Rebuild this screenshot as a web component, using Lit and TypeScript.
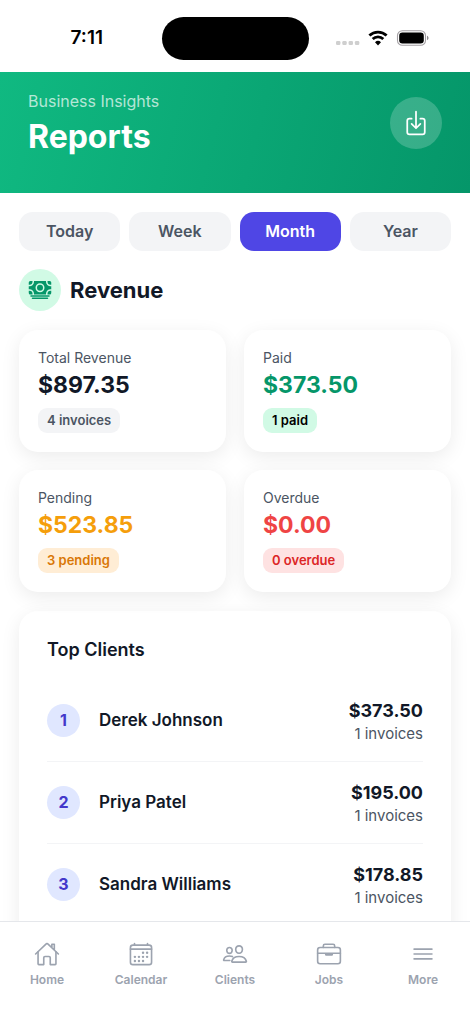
import { LitElement, html, css, svg } from "lit";
import { customElement, property, state } from "lit/decorators.js";
import { classMap } from "lit/directives/class-map.js";

const icons = {
  home: svg`<path d="M80 212v236a16 16 0 0016 16h96V328a24 24 0 0124-24h80a24 24 0 0124 24v136h96a16 16 0 0016-16V212"/><path d="M480 256L266.89 52c-5-5.28-16.69-5.34-21.78 0L32 256M400 179V64h-48v69"/>`,
  calendar: svg`<rect x="48" y="80" width="416" height="384" rx="48"/><path d="M128 48v32M384 48v32M464 160H48"/><g class="dots"><circle cx="296" cy="232" r="24"/><circle cx="376" cy="232" r="24"/><circle cx="136" cy="312" r="24"/><circle cx="216" cy="312" r="24"/><circle cx="296" cy="312" r="24"/><circle cx="376" cy="312" r="24"/><circle cx="136" cy="392" r="24"/><circle cx="216" cy="392" r="24"/><circle cx="296" cy="392" r="24"/></g>`,
  people: svg`<path d="M402 168c-2.93 40.67-33.1 72-66 72s-63.12-31.32-66-72c-3-42.31 26.37-72 66-72s69 30.46 66 72z"/><path d="M336 304c-65.17 0-127.84 32.37-143.54 95.41-2.08 8.34 3.15 16.59 11.72 16.59h263.65c8.57 0 13.77-8.25 11.72-16.59C463.85 335.36 401.18 304 336 304z"/><path d="M200 185.94c-2.34 32.48-26.72 58.06-53 58.06s-50.7-25.57-53-58.06C91.61 152.15 115.34 128 147 128s55.39 24.77 53 57.94z"/><path d="M206 306c-18.05-8.27-37.93-11.45-59-11.45-52 0-102.1 25.85-114.65 76.2-1.65 6.66 2.53 13.25 9.37 13.25H154"/>`,
  briefcase: svg`<rect x="32" y="128" width="448" height="320" rx="48"/><path d="M144 128V96a32 32 0 0132-32h160a32 32 0 0132 32v32M480 240H32M320 240v24a8 8 0 01-8 8H200a8 8 0 01-8-8v-24"/>`,
  menu: svg`<path d="M80 160h352M80 256h352M80 352h352"/>`,
  download: svg`<path d="M336 176h40a40 40 0 0140 40v208a40 40 0 01-40 40H136a40 40 0 01-40-40V216a40 40 0 0140-40h40"/><path d="M176 272l80 80 80-80M256 48v288"/>`,
  cash: svg`<path d="M448 400H64a16 16 0 010-32h384a16 16 0 010 32zM416 448H96a16 16 0 010-32h320a16 16 0 010 32zM32 272H16v48a32 32 0 0032 32h48v-16a64.07 64.07 0 00-64-64z"/><path d="M480 240h16v-64h-16a96.11 96.11 0 01-96-96V64H128v16a96.11 96.11 0 01-96 96H16v64h16a96.11 96.11 0 0196 96v16h256v-16a96.11 96.11 0 0196-96zm-224 64a96 96 0 1196-96 96.11 96.11 0 01-96 96z"/><circle cx="256" cy="208" r="64"/><path d="M416 336v16h48a32 32 0 0032-32v-48h-16a64.07 64.07 0 00-64 64zM480 144h16V96a32 32 0 00-32-32h-48v16a64.07 64.07 0 0064 64zM96 80V64H48a32 32 0 00-32 32v48h16a64.07 64.07 0 0064-64z"/>`,
};

type IconName = keyof typeof icons;

@customElement("line-icon")
export class LineIcon extends LitElement {
  @property() name: IconName = "home";

  static styles = css`
    :host {
      display: block;
      width: 26px;
      height: 26px;
    }
    svg {
      display: block;
      width: 100%;
      height: 100%;
      fill: none;
      stroke: currentColor;
      stroke-width: 32;
      stroke-linecap: round;
      stroke-linejoin: round;
    }
    .dots,
    .solid {
      fill: currentColor;
      stroke: none;
    }
  `;

  render() {
    return html`<svg viewBox="0 0 512 512" aria-hidden="true" class=${classMap({ solid: this.name === "cash" })}>
      ${icons[this.name]}
    </svg>`;
  }
}

@customElement("status-bar")
export class StatusBar extends LitElement {
  static styles = css`
    :host {
      display: grid;
      grid-template-columns: 1fr 147px 1fr;
      align-items: center;
      height: 72px;
      box-sizing: border-box;
      padding: 8px 0 4px;
      background: #fff;
      color: #000;
    }
    .time {
      padding-left: 12px;
      text-align: center;
      font-size: 19px;
      font-weight: 600;
      line-height: 24px;
    }
    .island {
      height: 43px;
      border-radius: 22px;
      background: #000;
    }
    .indicators {
      display: flex;
      align-items: center;
      justify-content: flex-end;
      gap: 8px;
      padding-right: 41px;
    }
    .indicators svg {
      display: block;
    }
    .signal {
      margin-top: 10px;
    }
  `;

  render() {
    return html`
      <div class="time">7:11</div>
      <div class="island"></div>
      <div class="indicators">
        <svg class="signal" width="24" height="4" viewBox="0 0 24 4" fill="#cfcfcf" aria-hidden="true">
          <rect x="0" width="4.4" height="4" rx="1.2" />
          <rect x="6.3" width="4.4" height="4" rx="1.2" />
          <rect x="12.6" width="4.4" height="4" rx="1.2" />
          <rect x="18.9" width="4.4" height="4" rx="1.2" />
        </svg>
        <svg width="20" height="16" viewBox="0 0 20 16" fill="none" stroke="#000" stroke-width="2.8" aria-hidden="true">
          <path d="M1.4 5.6a12.4 12.4 0 0 1 17.2 0" />
          <path d="M4.7 9.1a7.6 7.6 0 0 1 10.6 0" />
          <path d="M10 15.4l-3-3.2a4.3 4.3 0 0 1 6 0z" fill="#000" stroke="none" />
        </svg>
        <svg width="33" height="16" viewBox="0 0 33 16" aria-hidden="true">
          <rect x="1.5" y=".7" width="28" height="14.6" rx="4.8" fill="none" stroke="#a39fa3" stroke-width="1.1" />
          <rect x="3.2" y="2.5" width="24.6" height="11" rx="3.2" fill="#000" />
          <path d="M31 5.8v4.4c1-.4 1.5-1.2 1.5-2.2s-.5-1.8-1.5-2.2z" fill="#8f8b8f" />
        </svg>
      </div>
    `;
  }
}

@customElement("stat-card")
export class StatCard extends LitElement {
  @property() label = "";
  @property() amount = "";
  @property() badge = "";
  @property() tone = "neutral";

  static styles = css`
    .card {
      display: flex;
      flex-direction: column;
      align-items: flex-start;
      padding: 19px;
      border-radius: 19px;
      background: #fff;
      box-shadow: 0 5px 19px rgba(0, 0, 0, 0.08);
    }
    .label {
      font-size: 14px;
      line-height: 18px;
      color: #4b5563;
    }
    .amount {
      margin: 4px 0 9px;
      font-size: 23px;
      font-weight: 700;
      line-height: 28px;
      color: #111827;
    }
    .badge {
      padding: 3px 9px;
      border-radius: 9px;
      font-size: 13px;
      font-weight: 600;
      line-height: 19px;
      background: #f3f4f6;
      color: #4b5563;
    }
    .paid .amount {
      color: #059669;
    }
    .paid .badge {
      background: #d1fae5;
      color: #000;
    }
    .pending .amount {
      color: #f59e0b;
    }
    .pending .badge {
      background: #ffedd5;
      color: #d97706;
    }
    .overdue .amount {
      color: #ef4444;
    }
    .overdue .badge {
      background: #fee2e2;
      color: #dc2626;
    }
  `;

  render() {
    return html`
      <div class="card ${this.tone}">
        <div class="label">${this.label}</div>
        <div class="amount">${this.amount}</div>
        <div class="badge">${this.badge}</div>
      </div>
    `;
  }
}

@customElement("app-root")
export class AppRoot extends LitElement {
  @state() private period = "Month";

  private periods = ["Today", "Week", "Month", "Year"];

  private stats = [
    { label: "Total Revenue", amount: "$897.35", badge: "4 invoices", tone: "neutral" },
    { label: "Paid", amount: "$373.50", badge: "1 paid", tone: "paid" },
    { label: "Pending", amount: "$523.85", badge: "3 pending", tone: "pending" },
    { label: "Overdue", amount: "$0.00", badge: "0 overdue", tone: "overdue" },
  ];

  private clients = [
    { name: "Derek Johnson", total: "$373.50", count: 1 },
    { name: "Priya Patel", total: "$195.00", count: 1 },
    { name: "Sandra Williams", total: "$178.85", count: 1 },
  ];

  private links: { label: string; icon: IconName }[] = [
    { label: "Home", icon: "home" },
    { label: "Calendar", icon: "calendar" },
    { label: "Clients", icon: "people" },
    { label: "Jobs", icon: "briefcase" },
    { label: "More", icon: "menu" },
  ];

  static styles = css`
    :host {
      display: flex;
      flex-direction: column;
      height: 100vh;
      background: #fff;
      color: #111827;
      font-family: Inter, "Liberation Sans", sans-serif;
    }
    status-bar,
    .header,
    .nav {
      flex: none;
    }
    h1,
    h2,
    h3,
    p {
      margin: 0;
      padding: 0;
    }
    .header {
      display: flex;
      justify-content: space-between;
      align-items: flex-start;
      padding: 19px 28px 36px;
      background: linear-gradient(104deg, #10b981, #059669);
      color: #fff;
    }
    .eyebrow {
      font-size: 16px;
      line-height: 20px;
      color: rgba(255, 255, 255, 0.7);
    }
    .title {
      margin-top: 6px;
      font-size: 32px;
      font-weight: 700;
      line-height: 40px;
    }
    .download {
      display: grid;
      place-items: center;
      width: 52px;
      height: 52px;
      margin-top: 6px;
      padding: 0;
      border: 0;
      border-radius: 50%;
      background: rgba(255, 255, 255, 0.2);
      color: #fff;
    }
    .download line-icon {
      width: 28px;
      height: 28px;
    }
    .content {
      flex: 1;
      min-height: 0;
      overflow-y: auto;
      scrollbar-width: none;
      padding: 19px;
    }
    .periods {
      display: grid;
      grid-template-columns: repeat(4, 1fr);
      gap: 9px;
    }
    .period {
      height: 39px;
      padding: 0 0 2px;
      border: 0;
      border-radius: 14px;
      background: #f3f4f6;
      color: #4b5563;
      font: 600 16px/20px Inter, "Liberation Sans", sans-serif;
    }
    .period.active {
      background: #4f46e5;
      color: #fff;
    }
    .section {
      display: flex;
      align-items: center;
      gap: 9px;
      margin: 18px 0 19px;
    }
    .section-icon {
      display: grid;
      place-items: center;
      width: 42px;
      height: 42px;
      border-radius: 50%;
      background: #d1fae5;
      color: #059669;
    }
    .section-icon line-icon {
      width: 24px;
      height: 24px;
    }
    .section-title {
      font-size: 22px;
      font-weight: 700;
      line-height: 28px;
    }
    .stats {
      display: grid;
      grid-template-columns: 1fr 1fr;
      gap: 18px;
    }
    .clients {
      margin-top: 19px;
      padding: 28px;
      border-radius: 19px;
      background: #fff;
      box-shadow: 0 5px 19px rgba(0, 0, 0, 0.08);
    }
    .clients-title {
      margin-bottom: 19px;
      font-size: 18px;
      font-weight: 600;
      line-height: 22px;
    }
    .client {
      display: flex;
      align-items: center;
      padding: 15px 0 16px;
      border-bottom: 1px solid #f3f4f6;
    }
    .rank {
      display: grid;
      place-items: center;
      width: 33px;
      height: 33px;
      border-radius: 50%;
      background: #e0e7ff;
      color: #4338ca;
      font-size: 16px;
      font-weight: 700;
    }
    .name {
      flex: 1;
      margin-left: 19px;
      font-size: 17px;
      font-weight: 600;
      line-height: 22px;
    }
    .totals {
      padding-top: 4px;
      text-align: right;
    }
    .total {
      font-size: 18px;
      font-weight: 700;
      line-height: 24px;
    }
    .count {
      font-size: 15px;
      line-height: 22px;
      color: #4b5563;
    }
    .nav {
      display: grid;
      grid-template-columns: repeat(5, 1fr);
      padding: 19px 0 36px;
      border-top: 1px solid #e5e7eb;
      background: #fff;
    }
    .link {
      display: flex;
      flex-direction: column;
      align-items: center;
      gap: 5px;
      color: #9ca3af;
      font-size: 12px;
      font-weight: 600;
      line-height: 16px;
      text-decoration: none;
    }
  `;

  render() {
    return html`
      <status-bar></status-bar>
      <header class="header">
        <div>
          <p class="eyebrow">Business Insights</p>
          <h1 class="title">Reports</h1>
        </div>
        <button class="download" aria-label="Download report"><line-icon name="download"></line-icon></button>
      </header>
      <main class="content">
        <div class="periods">
          ${this.periods.map(
            (p) => html`<button
              class=${classMap({ period: true, active: p === this.period })}
              aria-pressed=${p === this.period ? "true" : "false"}
              @click=${() => (this.period = p)}
            >${p}</button>`
          )}
        </div>
        <div class="section">
          <span class="section-icon"><line-icon name="cash"></line-icon></span>
          <h2 class="section-title">Revenue</h2>
        </div>
        <div class="stats">
          ${this.stats.map(
            (s) => html`<stat-card .label=${s.label} .amount=${s.amount} .badge=${s.badge} .tone=${s.tone}></stat-card>`
          )}
        </div>
        <section class="clients">
          <h3 class="clients-title">Top Clients</h3>
          ${this.clients.map(
            (c, i) => html`<div class="client">
              <span class="rank">${i + 1}</span>
              <span class="name">${c.name}</span>
              <div class="totals">
                <div class="total">${c.total}</div>
                <div class="count">${c.count} invoices</div>
              </div>
            </div>`
          )}
        </section>
      </main>
      <nav class="nav">
        ${this.links.map(
          (l) => html`<a class="link" href="#${l.label.toLowerCase()}"><line-icon .name=${l.icon}></line-icon>${l.label}</a>`
        )}
      </nav>
    `;
  }
}
